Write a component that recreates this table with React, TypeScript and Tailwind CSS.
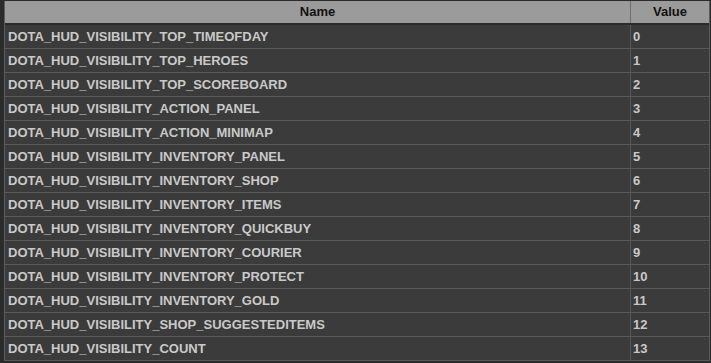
import React from "react";

const rows: [string, number][] = [
  ["DOTA_HUD_VISIBILITY_TOP_TIMEOFDAY", 0],
  ["DOTA_HUD_VISIBILITY_TOP_HEROES", 1],
  ["DOTA_HUD_VISIBILITY_TOP_SCOREBOARD", 2],
  ["DOTA_HUD_VISIBILITY_ACTION_PANEL", 3],
  ["DOTA_HUD_VISIBILITY_ACTION_MINIMAP", 4],
  ["DOTA_HUD_VISIBILITY_INVENTORY_PANEL", 5],
  ["DOTA_HUD_VISIBILITY_INVENTORY_SHOP", 6],
  ["DOTA_HUD_VISIBILITY_INVENTORY_ITEMS", 7],
  ["DOTA_HUD_VISIBILITY_INVENTORY_QUICKBUY", 8],
  ["DOTA_HUD_VISIBILITY_INVENTORY_COURIER", 9],
  ["DOTA_HUD_VISIBILITY_INVENTORY_PROTECT", 10],
  ["DOTA_HUD_VISIBILITY_INVENTORY_GOLD", 11],
  ["DOTA_HUD_VISIBILITY_SHOP_SUGGESTEDITEMS", 12],
  ["DOTA_HUD_VISIBILITY_COUNT", 13],
];

export default function App() {
  return (
    <div
      className="w-[711px] h-[363px] bg-[#2b2b2b] pl-[4px] pr-[1px] pt-[1px] overflow-hidden"
      style={{ fontFamily: '"Liberation Sans", Arial, sans-serif' }}
    >
      <div className="border-l border-r border-[#5c5c5c]">
        {/* header */}
        <div className="grid grid-cols-[626px_1fr] h-[22px] bg-[#9b9b9b] border-b-2 border-[#2b2b2b] box-content">
          <div className="flex items-center justify-center border-r border-[#6e6e6e] text-[13px] font-bold text-[#111]">
            Name
          </div>
          <div className="flex items-center justify-center text-[13px] font-bold text-[#111]">
            Value
          </div>
        </div>
        {/* body */}
        {rows.map(([name, value]) => (
          <div
            key={name}
            className="grid grid-cols-[626px_1fr] h-[24px] bg-[#3b3b3b] border-b border-[#585858]"
          >
            <div className="flex items-center pl-[3px] border-r border-[#585858] text-[13px] font-bold text-[#c9c9c9]">
              {name}
            </div>
            <div className="flex items-center pl-[2px] text-[13px] font-bold text-[#c9c9c9]">
              {value}
            </div>
          </div>
        ))}
      </div>
    </div>
  );
}
